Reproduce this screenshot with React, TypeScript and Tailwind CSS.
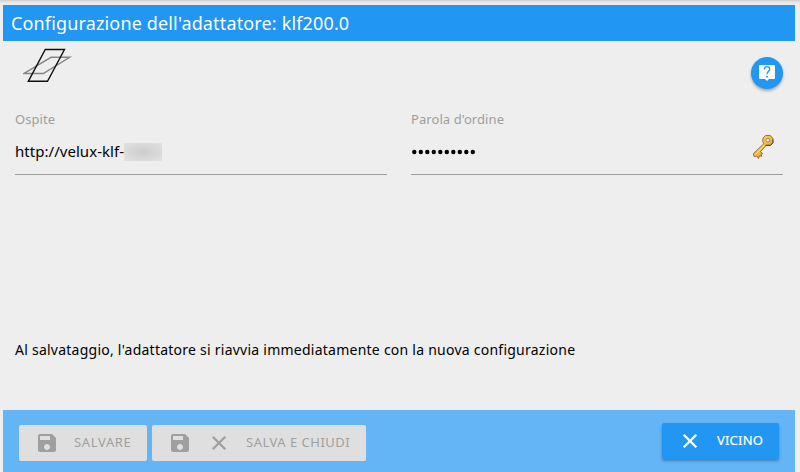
import { MdSave } from "react-icons/md";

function VeluxLogo() {
  return (
    <svg width="50" height="36" viewBox="0 0 50 36" fill="none" className="ml-2 block">
      <path d="M1 26.5H20.3L46.7 10.3H28Z" stroke="#858585" strokeWidth="1.4" />
      <path d="M5.3 34.3H24.5L41.5 2.5H22.3Z" stroke="#111" strokeWidth="1.4" />
    </svg>
  );
}

function CloseIcon() {
  return (
    <svg width="24" height="24" viewBox="0 0 24 24" fill="none" className="shrink-0">
      <path d="M5.7 5.7L18.3 18.3M18.3 5.7L5.7 18.3" stroke="currentColor" strokeWidth="2.3" />
    </svg>
  );
}

function HelpIcon() {
  return (
    <svg width="16" height="16" viewBox="0 0 16 16">
      <path d="M1 0H15Q16 0 16 1V13Q16 14 15 14H10L8 16L6 14H1Q0 14 0 13V1Q0 0 1 0Z" fill="#fff" />
      <path d="M5.4 4.4C5.4 2.6 6.5 1.7 8 1.7S10.7 2.7 10.7 4.2C10.7 6 8 6.6 8 9.2" fill="none" stroke="#2196f3" strokeWidth="1.3" />
      <rect x="7.1" y="11" width="1.8" height="1.4" fill="#2196f3" />
    </svg>
  );
}

function KeyIcon() {
  return (
    <svg width="24" height="28" viewBox="0 0 24 28">
      <defs>
        <linearGradient id="gold" x1="0" y1="0" x2="1" y2="1">
          <stop offset="0" stopColor="#ffe27a" />
          <stop offset="0.55" stopColor="#f2b93c" />
          <stop offset="1" stopColor="#bd7420" />
        </linearGradient>
      </defs>
      <path
        d="M11 4L13.5 1.5H18L20.8 4V8.5L18.5 11.2H14.3L8.3 17.7L10.8 19.5L9 20.5L9.8 22.3L7.5 21.8L6.5 24.5L4.8 22L2 22.5L1.3 19.8L11.8 9.7L10.8 7.5Z"
        fill="url(#gold)"
        stroke="#8c6238"
        strokeWidth="0.9"
      />
      <path d="M3 20.8L12.5 11" stroke="#ffe68c" strokeWidth="1" />
      <path d="M13.5 11.4H18.5L21 8.7V5.5" fill="none" stroke="#64313b" strokeWidth="1" />
      <circle cx="15.8" cy="6.2" r="1.9" fill="#eee" stroke="#9b7953" strokeWidth="0.9" />
    </svg>
  );
}

export default function App() {
  return (
    <div className="h-[472px] w-[800px] overflow-hidden border-t border-[#d2d2d2] bg-[#eee] bg-linear-to-b from-[#dedede] to-[#eee] to-[3px] pr-[5px] pl-[3px] font-['Noto_Sans',sans-serif] text-black">
      <div className="flex h-full flex-col pt-1">
        <header className="flex h-9 shrink-0 items-center bg-[#2196f3] pl-2 text-[18px] tracking-[0.15px] text-white">
          <h1 className="whitespace-nowrap">Configurazione dell'adattatore: klf200.0</h1>
        </header>
        <div className="flex h-[62px] shrink-0 items-start justify-between pt-[6px] pr-3 pl-3">
          <VeluxLogo />
          <button className="mt-[10px] flex size-8 items-center justify-center rounded-full bg-[#2196f3] shadow-[0_2px_3px_rgba(0,0,0,0.3)]">
            <HelpIcon />
          </button>
        </div>
        <main className="flex flex-1 flex-col px-3">
          <div className="grid grid-cols-2 gap-6">
            <div className="h-[72px] border-b border-[#9e9e9e]">
              <div className="pt-[7px] text-[13px] leading-[18px] tracking-[0.07px] text-[#9e9e9e]"><span>Ospite</span></div>
              <div className="mt-[11px] flex h-6 items-center text-[15px] tracking-[0.04px]">
                <span>http://velux-klf-</span>
                <span className="mt-[2px] h-[18px] w-[38px] bg-radial from-[#cdcdcd] to-[#e2e2e2]" />
              </div>
            </div>
            <div className="flex h-[72px] justify-between border-b border-[#9e9e9e]">
              <div>
                <div className="pt-[7px] text-[13px] leading-[18px] tracking-[0.07px] text-[#9e9e9e]"><span>Parola d'ordine</span></div>
                <svg width="68" height="24" viewBox="0 0 68 24" className="mt-[11px] block">
                  {Array.from({ length: 10 }, (_, i) => (
                    <circle key={i} cx={3.3 + i * 6.5} cy="13" r="2.2" />
                  ))}
                </svg>
              </div>
              <div className="mt-[31px] mr-[7px]"><KeyIcon /></div>
            </div>
          </div>
          <p className="mt-[165px] text-[14px] leading-5 tracking-[0.245px] whitespace-nowrap">
            Al salvataggio, l'adattatore si riavvia immediatamente con la nuova configurazione
          </p>
        </main>
        <footer className="flex h-[62px] shrink-0 items-start bg-[#64b5f6] pr-4 pl-4 text-[13px] tracking-[0.5px]">
          <button className="mt-[15px] flex h-9 w-32 shrink-0 items-center rounded-[2px] bg-[#dfdfdf] pl-4 text-[#9f9f9f]">
            <MdSave size={24} />
            <span className="ml-[15px] tracking-[0.65px]">SALVARE</span>
          </button>
          <button className="mt-[15px] ml-[5px] flex h-9 w-[214px] shrink-0 items-center rounded-[2px] bg-[#dfdfdf] pl-4 text-[#9f9f9f]">
            <MdSave size={24} />
            <div className="ml-[15px]"><CloseIcon /></div>
            <span className="ml-[15px]">SALVA E CHIUDI</span>
          </button>
          <button className="mt-[13px] ml-auto flex h-9 w-[117px] shrink-0 items-center rounded-[2px] bg-[#2196f3] pl-4 tracking-[0.2px] text-white shadow-[0_2px_3px_rgba(0,0,0,0.3)]">
            <CloseIcon />
            <span className="ml-[15px] [-webkit-text-stroke:0.2px_white]">VICINO</span>
          </button>
        </footer>
      </div>
    </div>
  );
}
